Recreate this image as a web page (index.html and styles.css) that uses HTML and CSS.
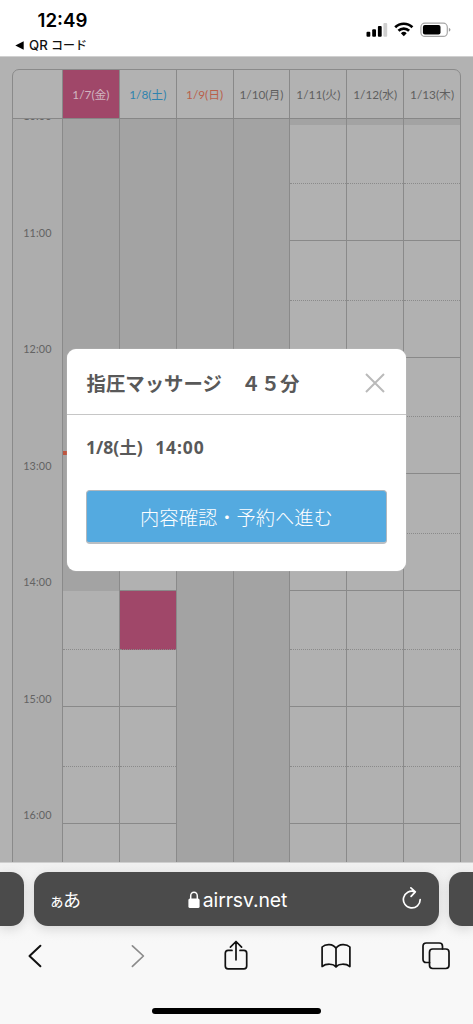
FILE: index.html
```html
<!DOCTYPE html>
<html lang="ja">
<head>
<meta charset="utf-8">
<title>airrsv.net</title>
<link rel="stylesheet" href="styles.css">
</head>
<body>
<div class="phone">
  <header class="status">
    <div class="status-left">
      <div class="clock">12:49</div>
      <div class="back"><svg class="back-arrow" width="9" height="9" viewBox="0 0 9 9"><path d="M8.7.2v8.6L.3 4.5z"/></svg><span class="back-text">QR<span class="back-kana">コード</span></span></div>
    </div>
    <svg class="status-icons" width="86" height="18" viewBox="0 0 86 18">
      <rect x="0.5" y="11.7" width="3.8" height="5" rx="1"/>
      <rect x="6.2" y="9.3" width="3.8" height="7.4" rx="1"/>
      <rect x="11.9" y="6.1" width="3.8" height="10.6" rx="1"/>
      <rect x="17.4" y="3" width="3.8" height="13.7" rx="1" fill="#cfcfcf"/>
      <g fill="none" stroke="#000" stroke-width="2.7">
        <path d="M29.2 7.3a12.2 12.2 0 0 1 17.2 0"/>
        <path d="M32.5 10.8a7.5 7.5 0 0 1 10.6 0"/>
      </g>
      <path d="M34.9 13.2a4.1 4.1 0 0 1 5.8 0l-2.9 3.1z"/>
      <rect x="54.9" y="3.2" width="26.4" height="13.2" rx="4" fill="none" stroke="#a6a6a6" stroke-width="1.2"/>
      <rect x="56.9" y="5" width="17.6" height="9.6" rx="2"/>
      <path d="M82.9 7.8q3.2 2 0 4z" fill="#999"/>
    </svg>
  </header>

  <main class="page">
    <section class="calendar">
      <div class="days">
        <div class="day corner"></div>
        <div class="day today">1/7(金)</div>
        <div class="day sat">1/8(土)</div>
        <div class="day sun">1/9(日)</div>
        <div class="day">1/10(月)</div>
        <div class="day">1/11(火)</div>
        <div class="day">1/12(水)</div>
        <div class="day">1/13(木)</div>
      </div>
      <div class="grid">
        <div class="times">
          <div class="time">10:00</div>
          <div class="time">11:00</div>
          <div class="time">12:00</div>
          <div class="time">13:00</div>
          <div class="time">14:00</div>
          <div class="time">15:00</div>
          <div class="time">16:00</div>
        </div>
      </div>
    </section>
    <div class="now"></div>

    <section class="modal">
      <div class="modal-head">
        <h1 class="modal-title">指圧マッサージ　４５分</h1>
        <svg class="close" width="20" height="20" viewBox="0 0 20 20"><path d="M1 1l18 18M19 1L1 19"/></svg>
      </div>
      <div class="modal-body">
        <div class="slot-date"><span class="date-day">1/8(土)</span><span class="date-time">14:00</span></div>
        <button class="confirm">内容確認・予約へ進む</button>
      </div>
    </section>
  </main>

  <footer class="browser">
    <div class="tabs">
      <div class="tab-edge left"></div>
      <div class="address">
        <span class="aa"><span class="aa-small">ぁ</span>あ</span>
        <span class="host"><svg width="12" height="18" viewBox="0 0 12 18"><rect x="0.4" y="7.4" width="11.2" height="9.6" rx="1.6" fill="#fff"/><path d="M2.7 8V4.9a3.3 3.6 0 0 1 6.6 0V8" fill="none" stroke="#fff" stroke-width="1.5"/></svg><span class="host-name">airrsv.net</span></span>
        <svg class="reload" width="20" height="24" viewBox="0 0 20 24"><path d="M12.600 4.600A8.400 8.400 0 1 0 18.200 12.500M8.900 .9l4.400 3.900-4.200 4.500"/></svg>
      </div>
      <div class="tab-edge right"></div>
    </div>
    <nav class="tools">
      <svg width="14" height="30" viewBox="0 0 14 30"><path d="M12.4 4.8L1.5 15l10.9 10.3" stroke-width="2"/></svg>
      <svg class="forward" width="14" height="30" viewBox="0 0 14 30"><path d="M1.4 4.8L12.4 15 1.4 25.3"/></svg>
      <svg width="26" height="34" viewBox="0 0 26 34"><path d="M9 11.4H5.1q-2.8 0-2.8 2.8v12.9q0 2.8 2.8 2.8h15.8q2.8 0 2.8-2.8V14.2q0-2.8-2.8-2.8H17M13 20.8V3M7.4 8.1L13 2.5l5.6 5.6"/></svg>
      <svg width="30" height="26" viewBox="0 0 30 26"><path d="M15 5.3C12.2.6 4.5.7 1.1 4v19.5C5 20.5 12.2 20.3 15 23.9 17.8 20.3 25 20.5 28.9 23.5V4C25.5.7 17.8.6 15 5.3zV23.9"/></svg>
      <svg width="28" height="28" viewBox="0 0 28 28"><rect x="7.5" y="7" width="19.5" height="19.5" rx="3.2"/><path d="M7.5 20.500H4.300Q1 20.500 1 17.200V4.300Q1 1 4.300 1h12.900q3.300 0 3.300 3.300V7"/></svg>
    </nav>
    <div class="home"></div>
  </footer>
</div>
<script src="calendar.js"></script>
</body>
</html>
```
FILE: styles.css
```css
* { box-sizing: border-box; }
body { margin: 0; background: #fff; font-family: Inter, "Noto Sans CJK JP", sans-serif; }
.phone { width: 473px; height: 1024px; display: flex; flex-direction: column; overflow: hidden; }

.status { height: 57px; flex: none; display: flex; justify-content: space-between; padding: 9px 21px 0 15px; border-bottom: 1px solid #d0d0d0; }
.clock { padding-left: 22.5px; font-size: 18.7px; line-height: 24px; font-weight: 600; letter-spacing: 0; color: #000; }
.back { display: flex; align-items: center; height: 24px; color: #111; }
.back-text { margin-left: 5px; font-size: 13.2px; font-weight: 500; line-height: 22px; letter-spacing: 0.2px; }
.back-kana { margin-left: 3px; font-size: 12px; letter-spacing: -0.1px; }
.status-icons { margin-top: 11px; }

.page { position: relative; height: 806px; flex: none; overflow: hidden; background: #b2b2b2; padding: 12px 12px 0; border-bottom: 1px solid #cfcfcf; }
.calendar { width: 449px; height: 850px; border: 1px solid #8a8a8a; border-radius: 7px 7px 0 0; overflow: hidden; font-family: Lato, "Noto Sans CJK JP", sans-serif; color: #606060; }
.days, .grid { display: grid; grid-template-columns: 49px repeat(7, 1fr); }
.days { height: 49px; border-bottom: 1px solid #878787; }
.day { display: flex; align-items: center; justify-content: center; padding-bottom: 2px; font-size: 11.8px; letter-spacing: 0; white-space: nowrap; color: #5f5f5f; border-left: 1px solid #898989; font-weight: 400; }
.corner { border-left: 0; }
.today { background: #a04769; color: #d0b5c0; }
.sat { color: #2f83ae; }
.sun { color: #b9604a; }
.grid { height: 801px; overflow: hidden; }
.times { margin-top: -11px; background: #adadad; }
.time { height: 116.5px; padding-right: 10.5px; text-align: right; font-size: 10.8px; line-height: 16px; letter-spacing: 0.1px; color: #636363; }
.column { border-left: 1px solid #8a8a8a; background: #a3a3a3; }
.lead { height: 5.5px; }
.cell { background: #b1b1b1; }
.half { height: 59.5px; border-bottom: 1px dotted #8a8a8a; }
.hour { height: 57px; border-bottom: 1px solid #898989; }
.closed { background: #a3a3a3; border-bottom-color: transparent; }
.picked { background: #a04769; }
.now { position: absolute; left: 63px; top: 394px; width: 5px; height: 4px; background: #bc5641; }

.modal { position: absolute; left: 67px; top: 292px; width: 339px; height: 222px; background: #fff; border-radius: 9px; box-shadow: 0 0 1px #ddd; font-family: "Noto Sans", "Noto Sans CJK JP", sans-serif; color: #595959; }
.modal-head { height: 66px; display: flex; align-items: center; justify-content: space-between; padding: 2px 21px 0 19.5px; border-bottom: 1px solid #c6c6c6; }
.modal-title { margin: 0; font-family: "Noto Sans CJK JP", sans-serif; font-size: 19.4px; line-height: 28px; font-weight: 700; white-space: nowrap; }
.close { fill: none; stroke: #bababa; stroke-width: 2; }
.modal-body { padding: 18px 19px 0; }
.slot-date { height: 28px; display: flex; gap: 12.5px; font-size: 17.5px; line-height: 28px; font-weight: 700; }
.date-time { letter-spacing: 0.9px; }
.confirm { display: block; width: 301px; height: 54px; margin-top: 29px; padding: 1px 0 0; background: #54aae0; border: 1px solid #b0b7bd; border-bottom: 2px solid #b9bec3; border-radius: 4px; color: #fff; font: 300 19.3px/28px "Noto Sans CJK JP", sans-serif; white-space: nowrap; }

.browser { flex: 1; background: linear-gradient(#f1f1f1, #f8f8f8 50%); }
.tabs { height: 62px; display: flex; gap: 10px; padding-top: 9px; }
.tab-edge, .address { height: 54px; flex: none; background: #4b4b4b; box-shadow: 0 3px 12px #0002; }
.tab-edge { width: 24px; }
.left { border-radius: 0 13px 13px 0; }
.right { border-radius: 13px 0 0 13px; }
.address { width: 405px; border-radius: 14px; display: grid; grid-template-columns: 60px 1fr 60px; align-items: center; padding: 0 17px 0 15px; color: #fff; }
.aa { font: 400 18px/24px "Noto Sans CJK JP", sans-serif; white-space: nowrap; }
.aa-small { font-size: 15.5px; letter-spacing: -1.5px; }
.host { display: flex; align-items: center; justify-content: center; gap: 3px; padding: 2px 0 0 4px; }
.host-name { font-size: 19.4px; line-height: 26px; font-weight: 400; letter-spacing: -0.1px; }
.reload { justify-self: end; fill: none; stroke: #fff; stroke-width: 1.7; stroke-linecap: round; stroke-linejoin: round; }
.tools { height: 62px; display: grid; grid-template-columns: repeat(5, 100.3px); place-items: center; margin-left: -15px; }
.tools svg { fill: none; stroke: #111; stroke-width: 1.7; stroke-linecap: round; stroke-linejoin: round; }
.tools .forward { margin-left: 5px; stroke: #8b8b8b; }
.home { width: 169px; height: 6px; margin: 21px auto 0; border-radius: 3px; background: #000; }
```
FILE: calendar.js
```js
// o = open, x = closed, p = picked; one letter per half-hour slot from 10:00
const columns = [
  "xxxxxxxxoooooo",
  "xxxxxxoopooooo",
  "xxxxxxxxxxxxxx",
  "xxxxxxxxxxxxxx",
  "oooooooooooooo",
  "oooooooooooooo",
  "oooooooooooooo"
];
const kinds = { o: "", x: " closed", p: " picked" };
const grid = document.querySelector(".grid");
for (const slots of columns) {
  const column = document.createElement("div");
  column.className = "column";
  const lead = document.createElement("div");
  lead.className = "lead";
  column.append(lead);
  [...slots].forEach((slot, i) => {
    const cell = document.createElement("div");
    cell.className = "cell " + (i % 2 ? "hour" : "half") + kinds[slot];
    column.append(cell);
  });
  grid.append(column);
}
```
